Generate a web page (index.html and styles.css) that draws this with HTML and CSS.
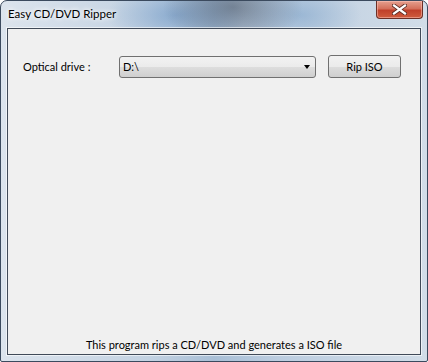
FILE: index.html
```html
<!DOCTYPE html>
<html>
<head>
<meta charset="utf-8">
<link rel="stylesheet" href="styles.css">
</head>
<body>
<div class="window">
  <div class="titlebar">
    <span class="title">Easy CD/DVD Ripper</span>
    <div class="close">
      <svg width="15" height="11" viewBox="0 0 15 11"><path d="M2 1.5 L13 9.5 M13 1.5 L2 9.5" stroke="#5a2a22" stroke-width="4" stroke-linecap="square"/><path d="M2 1.5 L13 9.5 M13 1.5 L2 9.5" stroke="#ffffff" stroke-width="2.2" stroke-linecap="square"/></svg>
    </div>
  </div>
  <div class="client">
    <div class="row">
      <span class="label">Optical drive :</span>
      <div class="combo">
        <span class="combo-text">D:\</span>
        <span class="arrow"></span>
      </div>
      <button class="btn">Rip ISO</button>
    </div>
    <div class="status">This program rips a CD/DVD and generates a ISO file</div>
  </div>
</div>
</body>
</html>
```
FILE: styles.css
```css
html, body {
  margin: 0;
  padding: 0;
  width: 428px;
  height: 362px;
  overflow: hidden;
  background: #ffffff;
}
.window {
  box-sizing: border-box;
  width: 428px;
  height: 362px;
  border: 1px solid #3b4a5e;
  border-radius: 7px 7px 2px 2px;
  background:
    radial-gradient(ellipse 70px 40px at 232px 6px, rgba(80,90,105,0.6), rgba(80,90,105,0) 100%),
    radial-gradient(ellipse 70px 30px at 175px 14px, rgba(100,145,195,0.55), rgba(100,145,195,0) 100%),
    radial-gradient(ellipse 60px 30px at 300px 14px, rgba(120,160,200,0.5), rgba(120,160,200,0) 100%),
    linear-gradient(90deg, #dce4ed 0%, #c3d2e2 35%, #a9bfd6 50%, #bccde0 65%, #d2dde8 100%);
  display: flex;
  flex-direction: column;
  font-family: Lato, "Noto Sans", sans-serif;
}
.titlebar {
  height: 27px;
  display: flex;
  justify-content: space-between;
  align-items: flex-start;
  padding-left: 7px;
  padding-right: 4px;
}
.title {
  margin-top: 6px;
  font-size: 11.5px;
  color: #000;
  text-shadow: 0 0 6px #ffffff, 0 0 4px #ffffff;
}
.close {
  width: 47px;
  height: 18px;
  box-sizing: border-box;
  border: 1px solid #6b2f26;
  border-top: none;
  border-radius: 0 0 4px 4px;
  background: linear-gradient(180deg, #e6a08f 0%, #d4705b 45%, #c0402a 55%, #cf5c3e 100%);
  box-shadow: inset 0 0 0 1px rgba(255,200,190,0.5);
  display: flex;
  align-items: center;
  justify-content: center;
}
.client {
  flex: 1;
  margin: 0 6px 6px 6px;
  border: 1px solid #404a58;
  box-shadow: 0 0 0 1px rgba(255,255,255,0.6);
  background: #f0f0f0;
  display: flex;
  flex-direction: column;
  font-size: 11px;
  color: #000;
}
.row {
  display: flex;
  align-items: center;
  margin-top: 26px;
  padding-left: 15px;
}
.label {
  width: 96px;
}
.combo {
  box-sizing: border-box;
  width: 197px;
  height: 22px;
  border: 1px solid #707070;
  border-radius: 3px;
  background: linear-gradient(180deg, #f2f2f2 0%, #ebebeb 50%, #dddddd 51%, #cfcfcf 100%);
  display: flex;
  align-items: center;
  justify-content: space-between;
  padding: 0 5px 0 3px;
}
.arrow {
  width: 0;
  height: 0;
  border-left: 3.5px solid transparent;
  border-right: 3.5px solid transparent;
  border-top: 4px solid #000;
}
.btn {
  box-sizing: border-box;
  margin-left: 12px;
  width: 73px;
  height: 23px;
  border: 1px solid #707070;
  border-radius: 3px;
  background: linear-gradient(180deg, #f2f2f2 0%, #ebebeb 50%, #dddddd 51%, #cfcfcf 100%);
  font-family: inherit;
  font-size: 11px;
  color: #000;
  padding: 0;
}
.status {
  margin-top: auto;
  margin-bottom: 2px;
  text-align: center;
  line-height: 14px;
}
```
